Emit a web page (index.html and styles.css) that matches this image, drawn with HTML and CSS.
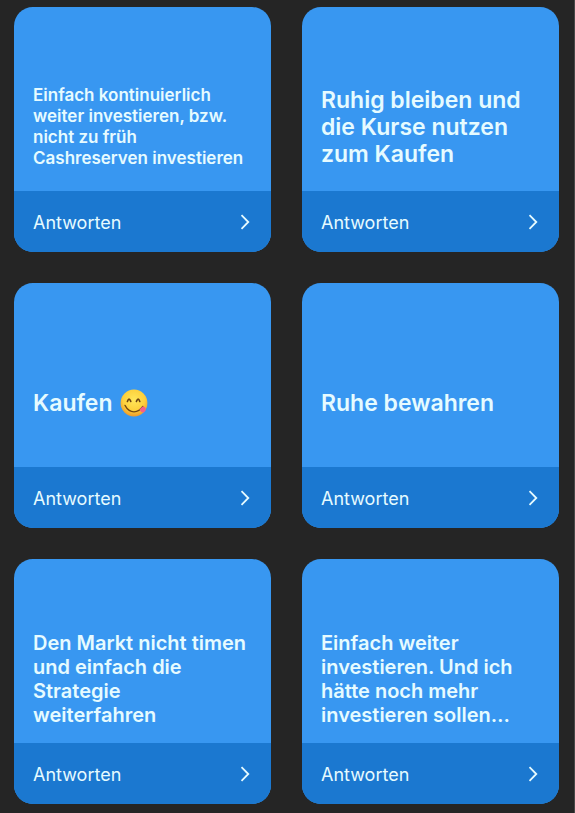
FILE: index.html
```html
<!doctype html>
<html lang="de">
<head>
    <meta charset="UTF-8">
    <meta name="viewport" content="width=device-width, initial-scale=1.0">
    <title>Antworten</title>
    <link rel="stylesheet" href="styles.css">
</head>
<body>
<svg class="defs" aria-hidden="true">
    <symbol id="arrow" viewBox="0 0 10 16">
        <path d="M1.5 1.2 L8.3 8 L1.5 14.8" fill="none" stroke="currentColor" stroke-width="1.8"/>
    </symbol>
</svg>

<main class="list">
    <article class="card">
        <div class="card_body">
            <p class="text small">Einfach kontinuierlich weiter investieren, bzw. nicht zu früh Cashreserven investieren</p>
        </div>
        <button type="button" class="card_btn">Antworten <svg class="arrow" aria-hidden="true"><use href="#arrow"/></svg></button>
    </article>

    <article class="card">
        <div class="card_body">
            <p class="text large">Ruhig bleiben und die Kurse nutzen zum Kaufen</p>
        </div>
        <button type="button" class="card_btn">Antworten <svg class="arrow" aria-hidden="true"><use href="#arrow"/></svg></button>
    </article>

    <article class="card">
        <div class="card_body">
            <p class="text large with_emoji">
                <span>Kaufen</span>
                <svg class="emoji" viewBox="0 0 28 28" role="img" aria-label="😋">
                    <defs>
                        <radialGradient id="face" cx="50%" cy="38%" r="62%">
                            <stop offset="0" stop-color="#ffe75a"/>
                            <stop offset="0.65" stop-color="#fdd03c"/>
                            <stop offset="1" stop-color="#ee9a2b"/>
                        </radialGradient>
                    </defs>
                    <circle cx="14" cy="14" r="13.4" fill="url(#face)"/>
                    <path d="M7.4 12.4 Q9 7.8 10.8 12.4" fill="none" stroke="#6b4312" stroke-width="1.6" stroke-linecap="round"/>
                    <path d="M16.4 12.4 Q18.2 7.8 19.8 12.4" fill="none" stroke="#6b4312" stroke-width="1.6" stroke-linecap="round"/>
                    <path d="M5 16.4 Q8.4 22.8 14 22.8 Q19.4 22.6 22.8 17.4" fill="none" stroke="#744811" stroke-width="1.3" stroke-linecap="round"/>
                    <path d="M19.4 20.4 L22.6 17.6 Q25.2 17.6 25.8 19.8 Q26 22.6 23.6 23.4 Q20.8 23.6 19.4 20.4 Z" fill="#f2608b"/>
                </svg>
            </p>
        </div>
        <button type="button" class="card_btn">Antworten <svg class="arrow" aria-hidden="true"><use href="#arrow"/></svg></button>
    </article>

    <article class="card">
        <div class="card_body">
            <p class="text large">Ruhe bewahren</p>
        </div>
        <button type="button" class="card_btn">Antworten <svg class="arrow" aria-hidden="true"><use href="#arrow"/></svg></button>
    </article>

    <article class="card">
        <div class="card_body">
            <p class="text medium">Den Markt nicht timen und einfach die Strategie<br>weiterfahren</p>
        </div>
        <button type="button" class="card_btn">Antworten <svg class="arrow" aria-hidden="true"><use href="#arrow"/></svg></button>
    </article>

    <article class="card">
        <div class="card_body">
            <p class="text medium">Einfach weiter investieren. Und ich hätte noch mehr investieren sollen…</p>
        </div>
        <button type="button" class="card_btn">Antworten <svg class="arrow" aria-hidden="true"><use href="#arrow"/></svg></button>
    </article>
</main>
</body>
</html>
```
FILE: styles.css
```css
body {
    margin: 0;
    background: #252525;
    color: #e6fbff;
    font-family: Inter, "Liberation Sans", sans-serif;
}

p {
    margin: 0;
}

.defs {
    display: none;
}

.list {
    display: grid;
    grid-template-columns: 1fr 1fr;
    gap: 31px;
    padding: 7px 15px 9px 14px;
    border-right: 1px solid #484848;
}

.card {
    display: flex;
    flex-direction: column;
    border-radius: 19px;
    overflow: hidden;
    background: #3897f1;
}

.card_body {
    flex: 1;
    display: flex;
    align-items: center;
    box-sizing: border-box;
    min-height: 184px;
    padding: 56px 19px 0;
}

.text {
    font-weight: 600;
}

.small {
    font-size: 17px;
    line-height: 21px;
}

.medium {
    font-size: 20px;
    line-height: 24px;
}

.large {
    font-size: 23px;
    line-height: 27px;
}

.with_emoji {
    display: flex;
    align-items: center;
    gap: 7px;
}

.emoji {
    width: 28px;
    height: 28px;
}

.card_btn {
    display: flex;
    align-items: center;
    justify-content: space-between;
    height: 61px;
    padding: 1px 21px 0 19px;
    border: 0;
    background: #1b78d0;
    color: inherit;
    font-family: inherit;
    font-size: 18px;
    cursor: pointer;
}

.arrow {
    width: 10px;
    height: 16px;
}
```
